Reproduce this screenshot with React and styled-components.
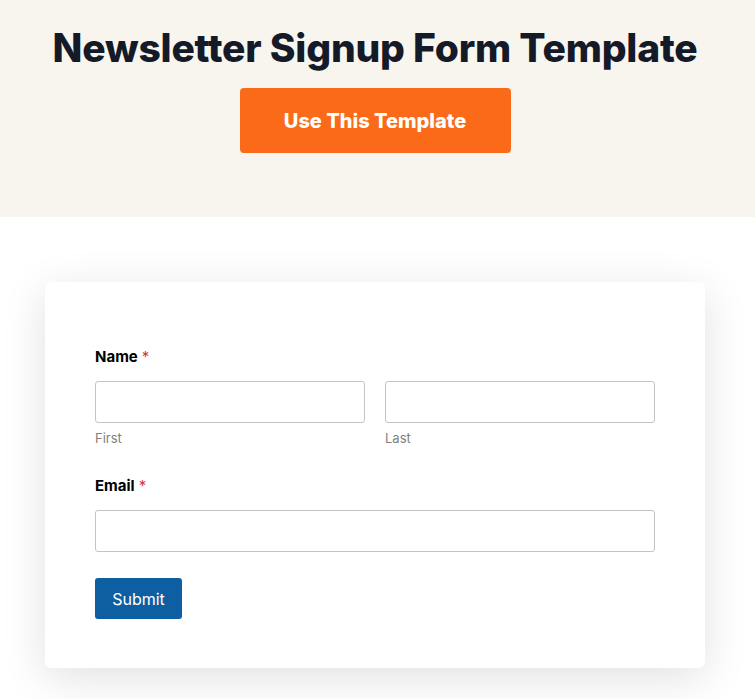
import styled, { createGlobalStyle } from "styled-components";

const GlobalStyle = createGlobalStyle`
  body {
    margin: 0;
    background: #ffffff;
    font-family: Inter, "Noto Sans", sans-serif;
  }
  * { box-sizing: border-box; }
`;

const Page = styled.div`
  width: 100%;
  min-height: 699px;
  background: #ffffff;
`;

const Hero = styled.header`
  height: 217px;
  background: #f8f5ef;
  display: flex;
  flex-direction: column;
  align-items: center;
  padding: 24px 5px 0 0;
`;

const Title = styled.h1`
  margin: 0;
  font-family: Inter, sans-serif;
  font-weight: 800;
  font-size: 39px;
  line-height: 48px;
  letter-spacing: -0.2px;
  color: #141a28;
  white-space: nowrap;
`;

const TemplateButton = styled.button`
  margin-top: 16px;
  width: 271px;
  height: 65px;
  border: none;
  border-radius: 4px;
  background: #fa6a19;
  color: #ffffff;
  font-family: Inter, sans-serif;
  font-weight: 800;
  font-size: 20px;
  cursor: pointer;
`;

const Section = styled.section`
  padding: 65px 50px 40px 45px;
`;

const Card = styled.div`
  width: 660px;
  background: #ffffff;
  border-radius: 6px;
  box-shadow: 0 10px 45px rgba(0, 0, 0, 0.12);
  padding: 65px 50px 49px 50px;
`;

const Field = styled.div`
  margin-bottom: ${(p) => p.$gap || 0}px;
`;

const Label = styled.div`
  font-family: Inter, sans-serif;
  font-weight: 700;
  font-size: 15px;
  line-height: 20px;
  color: #000000;
  margin-bottom: 14px;
`;

const Required = styled.span`
  color: #d63637;
  font-weight: 400;
  margin-left: 4px;
`;

const Row = styled.div`
  display: grid;
  grid-template-columns: 1fr 1fr;
  gap: 20px;
`;

const Input = styled.input`
  display: block;
  width: 100%;
  height: 42px;
  border: 1px solid #c4c4c4;
  border-radius: 3px;
  background: #ffffff;
  font-size: 15px;
  padding: 0 12px;
`;

const Sub = styled.div`
  font-family: Inter, sans-serif;
  font-size: 13px;
  line-height: 16px;
  color: #808080;
  margin-top: 7px;
`;

const Submit = styled.button`
  margin-top: 26px;
  width: 87px;
  height: 41px;
  border: none;
  border-radius: 3px;
  background: #0e5fa1;
  color: #ffffff;
  font-family: Inter, sans-serif;
  font-size: 16px;
  cursor: pointer;
`;

export default function App() {
  return (
    <Page>
      <GlobalStyle />
      <Hero>
        <Title>Newsletter Signup Form Template</Title>
        <TemplateButton>Use This Template</TemplateButton>
      </Hero>
      <Section>
        <Card>
          <Field $gap={30}>
            <Label>
              Name<Required>*</Required>
            </Label>
            <Row>
              <div>
                <Input type="text" />
                <Sub>First</Sub>
              </div>
              <div>
                <Input type="text" />
                <Sub>Last</Sub>
              </div>
            </Row>
          </Field>
          <Field>
            <Label>
              Email<Required>*</Required>
            </Label>
            <Input type="email" />
          </Field>
          <Submit>Submit</Submit>
        </Card>
      </Section>
    </Page>
  );
}
